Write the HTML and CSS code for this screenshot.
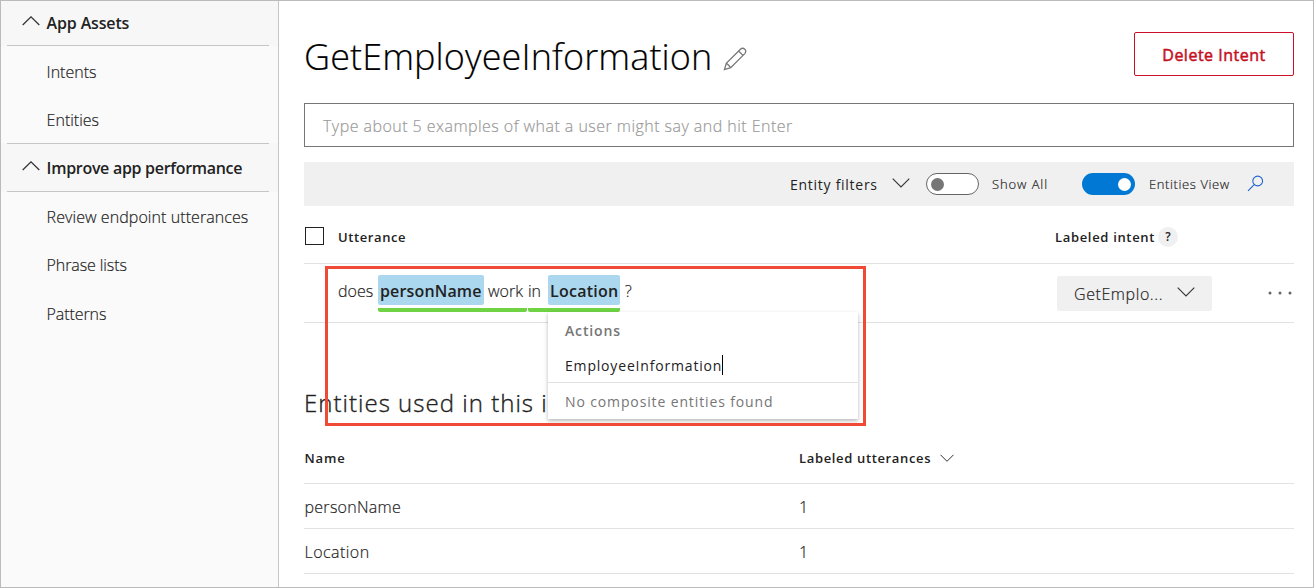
FILE: index.html
```html
<!DOCTYPE html>
<html lang="en">
<head>
<meta charset="utf-8">
<title>GetEmployeeInformation</title>
<link rel="stylesheet" href="styles.css">
</head>
<body>
<div class="app">
  <nav class="sidebar">
    <div class="group-head first"><svg class="chev-up" width="18" height="10" viewBox="0 0 18 10"><path d="M.7 9 9 .9 17.3 9"/></svg><span class="t-assets">App Assets</span></div>
    <a class="nav-item"><span class="t-intents">Intents</span></a>
    <a class="nav-item"><span class="t-entities">Entities</span></a>
    <div class="group-head second"><svg class="chev-up" width="18" height="10" viewBox="0 0 18 10"><path d="M.7 9 9 .9 17.3 9"/></svg><span class="t-improve">Improve app performance</span></div>
    <a class="nav-item"><span class="t-review">Review endpoint utterances</span></a>
    <a class="nav-item"><span class="t-phrase">Phrase lists</span></a>
    <a class="nav-item"><span class="t-patterns">Patterns</span></a>
  </nav>
  <main class="main">
    <header class="title-row">
      <h1 class="title"><span class="t-title">GetEmployeeInformation</span></h1>
      <svg class="pencil" width="24" height="24" viewBox="0 0 24 24"><path d="M1.5 22.500 3.300 16.300 17.400 2.200Q19.700.3 21.800 2.200 23.700 4.300 21.800 6.600L7.700 20.700ZM3.300 16.300 5.700 18.300 7.700 20.700M15.600 4 20 8.400"/></svg>
      <button class="delete"><span class="t-delete">Delete Intent</span></button>
    </header>
    <div class="example-box"><span class="t-type">Type about 5 examples of what a user might say and hit Enter</span></div>
    <div class="toolbar">
      <span class="filter"><span class="t-filters">Entity filters</span></span>
      <svg class="chev filter-chev" width="18" height="10" viewBox="0 0 18 10"><path d="M.7 .7 9 9 17.3 .7"/></svg>
      <span class="toggle off"></span>
      <span class="show-all"><span class="t-show">Show All</span></span>
      <span class="toggle on"></span>
      <span class="view"><span class="t-view">Entities View</span></span>
      <svg class="search" width="17" height="17" viewBox="0 0 17 17"><circle cx="10.700" cy="6" r="4.900"/><path d="M7.200 9.600 1 15.800"/></svg>
    </div>
    <section class="utterances">
      <div class="u-head">
        <span class="checkbox"></span>
        <span class="u-col"><span class="t-utt">Utterance</span></span>
        <span class="i-col"><span class="t-labint">Labeled intent</span></span>
        <span class="help">?</span>
      </div>
      <div class="u-row">
        <div class="sentence">
          <span class="word-does"><span class="t-does">does</span></span>
          <span class="composite person"><span class="entity"><span class="t-person">personName</span></span><span class="t-work">work</span></span>
          <span class="composite place"><span class="t-in">in</span><span class="entity"><span class="t-loc">Location</span></span></span>
          <span class="question">?</span>
        </div>
        <div class="intent-select"><span class="t-getemp">GetEmplo...</span><svg class="chev" width="18" height="10" viewBox="0 0 18 10"><path d="M.7 .7 9 9 17.3 .7"/></svg></div>
        <svg class="more" width="26" height="4" viewBox="0 0 26 4"><circle cx="2" cy="2" r="1.500"/><circle cx="12" cy="2" r="1.500"/><circle cx="22" cy="2" r="1.500"/></svg>
        <div class="menu">
          <div class="menu-head"><span class="t-actions">Actions</span></div>
          <div class="menu-input"><span class="t-empinfo">EmployeeInformation</span><i class="caret"></i></div>
          <div class="menu-empty"><span class="t-nocomp">No composite entities found</span></div>
        </div>
      </div>
    </section>
    <section class="entities">
      <h2 class="subtitle"><span class="t-used">Entities used in this i</span></h2>
      <div class="e-row e-head"><span class="e-name"><span class="t-name">Name</span></span><span class="t-labutt">Labeled utterances</span><svg class="chev small" width="14" height="9" viewBox="0 0 14 9"><path d="M.5 .8 7 7.300 13.500 .8"/></svg></div>
      <div class="e-row"><span class="e-name"><span class="t-pn">personName</span></span><span>1</span></div>
      <div class="e-row"><span class="e-name"><span class="t-lc">Location</span></span><span>1</span></div>
    </section>
  </main>
  <div class="callout"></div>
</div>
</body>
</html>
```
FILE: styles.css
```css
* { box-sizing: border-box; }
body { margin: 0; font: 300 16px/22px "Open Sans", "Noto Sans", sans-serif; color: #222; white-space: nowrap; -webkit-text-stroke: .18px; }
.app { position: relative; display: flex; width: 1314px; height: 588px; border: 1px solid #bbb; background: #fff; overflow: hidden; }
svg { display: block; flex: none; fill: none; stroke: #333; stroke-width: 1.3; }

.sidebar { width: 278px; flex: none; background: #fafafa; border-right: 1px solid #c6c6c6; }
.group-head { display: flex; align-items: center; gap: 6.6px; padding-left: 21px; background: #f7f7f7 linear-gradient(#c6c6c6, #c6c6c6) no-repeat 6px 100% / 262px 1px; font-weight: 600; -webkit-text-stroke: 0; }
.group-head.first { height: 45px; padding-bottom: 2px; }
.group-head.second { height: 49px; background: linear-gradient(#c6c6c6, #c6c6c6) no-repeat 6px 0 / 262px 1px, linear-gradient(#c6c6c6, #c6c6c6) no-repeat 6px 100% / 262px 1px, #f7f7f7; }
.nav-item { display: flex; align-items: center; height: 48.5px; padding: 2.6px 0 0 45.6px; }
.group-head.second ~ .nav-item { padding-top: 1px; }
.chev-up { margin-top: -3px; }

.main { flex: 1; padding: 31px 19px 0 25px; }
.title-row { display: flex; height: 44px; }
.title { margin: 0; width: 419px; font-size: 36px; font-weight: 300; line-height: 50px; color: #000; }
.pencil { margin-top: 15px; stroke: #777; }
.delete { width: 160px; height: 44px; margin-left: auto; padding: 2px 0 0; border: 1px solid #c8102a; border-radius: 2px; background: #fff; color: #c50f1f; font: 400 16px/22px "Open Sans", sans-serif; -webkit-text-stroke: .5px; }
.example-box { height: 44px; margin-top: 27px; padding: 11px 18px; border: 1px solid #767676; color: #999; line-height: 22px; }
.toolbar { display: flex; align-items: center; height: 44px; margin-top: 15px; padding-left: 486px; background: #f0f0f0; font-size: 13px; }
.filter { width: 102px; font-size: 14px; font-weight: 400; padding-top: 1px; -webkit-text-stroke: 0; }
.toggle { width: 53px; height: 22px; flex: none; border-radius: 11px; display: flex; align-items: center; padding: 0 4px; }
.toggle::before { content: ""; width: 13px; height: 13px; border-radius: 50%; }
.toggle.off { margin-left: 16px; border: 1px solid #666; background: #fff; }
.toggle.off::before { background: #767676; }
.toggle.on { justify-content: flex-end; background: #0078d4; }
.toggle.on::before { background: #fff; }
.show-all { width: 90px; margin-left: 13px; }
.view { width: 98px; margin-left: 14px; }
.chev { stroke-width: 1.1; }
.filter-chev { margin-top: -2px; }
.search { stroke: #2064d0; stroke-width: 1.1; margin-top: -2px; }

.u-head { display: flex; align-items: center; height: 58px; padding-top: 4px; border-bottom: 1px solid #e2e2e2; font-size: 13px; font-weight: 600; -webkit-text-stroke: 0; }
.checkbox { width: 19px; height: 18px; margin-left: 1px; margin-top: -2px; border: 1px solid #222; }
.u-col { width: 717px; margin-left: 14px; }
.i-col { width: 103px; }
.help { width: 20px; height: 20px; border-radius: 50%; background: #f0f0f0; line-height: 20px; text-align: center; font-size: 12px; }
.u-row { position: relative; display: flex; height: 59px; border-bottom: 1px solid #e2e2e2; }
.sentence { display: flex; width: 753px; padding: 11px 0 0 34px; line-height: 33px; }
.word-does { width: 40px; }
.composite { display: flex; height: 37px; margin-right: 1px; background: linear-gradient(#6fd344, #6fd344) no-repeat 0 100% / 100% 4px; border-radius: 0 0 2px 2px; }
.composite.person { width: 149px; gap: 4px; }
.composite.place { width: 92px; justify-content: space-between; }
.entity { height: 30px; border-radius: 2px; background: #abd8ef; font-weight: 600; -webkit-text-stroke: 0; padding-left: 2px; }
.person .entity { width: 106px; }
.place .entity { width: 72px; }
.question { margin-left: 4px; }
.intent-select { display: flex; align-items: center; justify-content: space-between; width: 155px; height: 35px; margin-top: 12px; padding: 0 17px; background: #f0f0f0; border-radius: 2px; }
.intent-select .chev { margin-top: -3px; }
.more { margin: 27px 0 0 56px; fill: #666; stroke: none; }
.menu { position: absolute; left: 244px; top: 48px; width: 310px; height: 107px; background: #fff; box-shadow: 0 2px 4px rgba(0,0,0,.28); font-size: 14px; z-index: 1; -webkit-text-stroke: 0; }
.menu > div { display: flex; align-items: center; padding: 2px 0 0 17px; height: 36px; }
.menu .menu-head { color: #767676; font-weight: 600; }
.menu .menu-input { height: 35px; border-bottom: 1px solid #e2e2e2; font-weight: 400; }
.menu .menu-empty { color: #767676; font-weight: 400; height: 37px; padding-top: 0; }
.caret { width: 1px; height: 20px; margin-top: -2px; background: #000; }

.entities { padding-top: 62px; }
.subtitle { margin: 0; font-size: 24px; line-height: 36px; font-weight: 300; -webkit-text-stroke: .35px; }
.e-row { display: flex; align-items: center; height: 45px; padding: 2px 0 0 .5px; border-bottom: 1px solid #e2e2e2; }
.e-head { height: 63px; padding-top: 12px; font-size: 13px; font-weight: 600; -webkit-text-stroke: 0; }
.e-name { width: 494.5px; }
.small { margin-left: 9px; stroke-width: 1; }
.callout { position: absolute; left: 324px; top: 265px; width: 541px; height: 160px; border: 3px solid #f04a37; z-index: 2; }

/* tracking per label */
.t-assets { letter-spacing: -.15px; }
.t-improve { letter-spacing: -.3px; }
.t-review { letter-spacing: .07px; }
.t-phrase, .t-patterns { letter-spacing: -.1px; }
.t-title { letter-spacing: .11px; }
.t-type { letter-spacing: .46px; }
.t-delete { letter-spacing: .5px; }
.t-filters { letter-spacing: .73px; }
.t-show { letter-spacing: .9px; }
.t-view { letter-spacing: .6px; }
.t-utt { letter-spacing: .6px; }
.t-labint { letter-spacing: .67px; }
.t-person { letter-spacing: .15px; }
.t-loc { letter-spacing: .25px; }
.t-getemp { letter-spacing: .58px; }
.t-actions { letter-spacing: .85px; }
.t-empinfo { letter-spacing: .82px; }
.t-nocomp { letter-spacing: .87px; }
.t-used { letter-spacing: 1.02px; }
.t-name { letter-spacing: .9px; }
.t-labutt { letter-spacing: .65px; }
.t-pn { letter-spacing: .28px; }
.t-lc { letter-spacing: .45px; }
```
